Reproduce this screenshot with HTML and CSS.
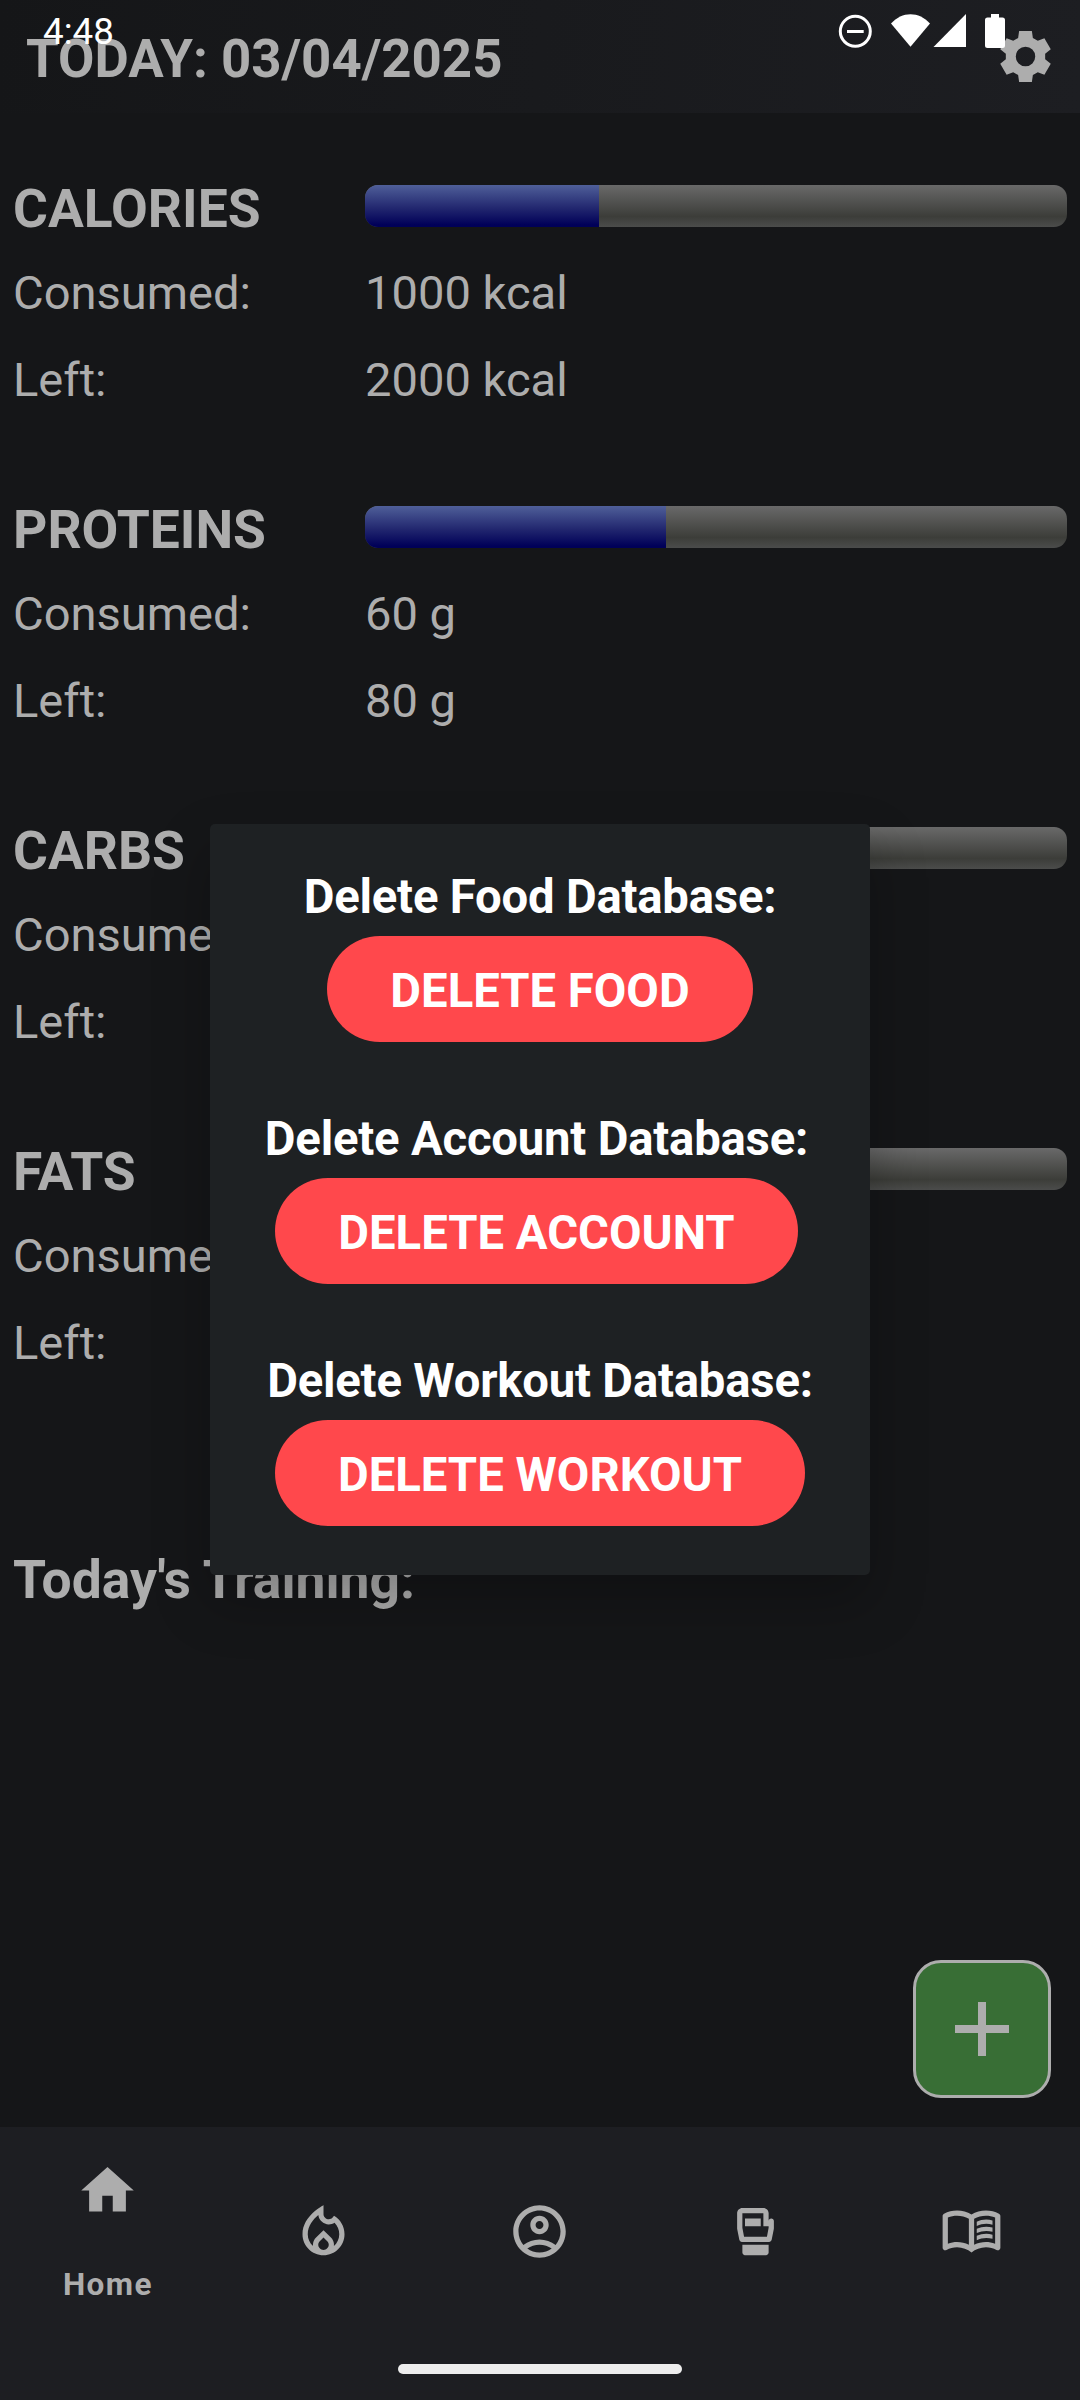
FILE: index.html
```html
<!DOCTYPE html>
<html lang="en">
<head>
<meta charset="utf-8">
<title>Today</title>
<link rel="stylesheet" href="styles.css">
</head>
<body>
<div class="app">
  <header class="topbar">
    <h1 class="title">TODAY: 03/04/2025</h1>
    <svg class="gear" viewBox="-76 -76 152 152"><path fill-rule="evenodd" d="M-22-55L-19-76H19L22-55L36.6-46.6L56.3-54.5L75.3-21.5L58.6-8.4V8.4L75.3 21.5L56.3 54.5L36.6 46.6L22 55L19 76H-19L-22 55L-36.6 46.6L-56.3 54.5L-75.3 21.5L-58.6 8.4V-8.4L-75.3-21.5L-56.3-54.5L-36.6-46.6ZM0-29A29 29 0 1 0 0 29A29 29 0 1 0 0-29Z"/></svg>
  </header>

  <main class="content">
    <section class="macro">
      <h2 class="heading">CALORIES</h2>
      <div class="bar"><div class="fill" style="width:33.33%"></div></div>
      <span>Consumed:</span><span>1000 kcal</span>
      <span>Left:</span><span>2000 kcal</span>
    </section>
    <section class="macro">
      <h2 class="heading">PROTEINS</h2>
      <div class="bar"><div class="fill" style="width:42.86%"></div></div>
      <span>Consumed:</span><span>60 g</span>
      <span>Left:</span><span>80 g</span>
    </section>
    <section class="macro">
      <h2 class="heading">CARBS</h2>
      <div class="bar"></div>
      <span>Consumed:</span><span></span>
      <span>Left:</span><span></span>
    </section>
    <section class="macro">
      <h2 class="heading">FATS</h2>
      <div class="bar"></div>
      <span>Consumed:</span><span></span>
      <span>Left:</span><span></span>
    </section>
    <h2 class="heading training">Today's Training:</h2>
    <div class="fab"><svg viewBox="0 0 54 54"><path d="M23 0h8v23h23v8H31v23h-8V31H0v-8h23z"/></svg></div>
  </main>

  <nav class="bottom">
    <div class="tabs">
      <div class="tab active">
        <svg class="icon" viewBox="0 0 24 24"><path d="M10 20v-6h4v6h5v-8h3L12 3 2 12h3v8z"/></svg>
        <span class="label">Home</span>
      </div>
      <div class="tab">
        <svg class="icon" viewBox="0 0 24 24"><path fill-rule="evenodd" d="M16,6l-0.44,0.55C14.38,8.02,12,7.19,12,5.3V2c0,0-8,4-8,11c0,4.42,3.58,8,8,8s8-3.58,8-8C20,10.04,18.39,7.38,16,6z M12,19c-1.1,0-2-0.87-2-1.94c0-0.51,0.2-0.99,0.58-1.36l1.42-1.4l1.43,1.4C13.8,16.07,14,16.55,14,17.06C14,18.13,13.1,19,12,19z M15.96,17.5c0.04-0.36,0.22-1.89-1.13-3.22L12,11.5l-2.83,2.78c-1.36,1.34-1.17,2.88-1.13,3.22C6.79,16.4,6,14.79,6,13c0-3.16,2.13-5.65,4.03-7.25c0.23,1.99,1.93,3.55,3.99,3.55c0.78,0,1.54-0.23,2.18-0.66C17.34,9.78,18,11.35,18,13C18,14.79,17.21,16.4,15.96,17.5z"/></svg>
      </div>
      <div class="tab">
        <svg class="icon" viewBox="0 0 24 24"><path fill-rule="evenodd" d="M12 2C6.48 2 2 6.48 2 12s4.48 10 10 10 10-4.48 10-10S17.52 2 12 2zM7.35 18.5C8.66 17.56 10.26 17 12 17s3.34.56 4.65 1.5C15.34 19.44 13.74 20 12 20s-3.34-.56-4.65-1.5zm10.79-1.38C16.45 15.8 14.32 15 12 15s-4.45.8-6.14 2.12C4.7 15.73 4 13.95 4 12c0-4.42 3.58-8 8-8s8 3.58 8 8c0 1.95-.7 3.73-1.86 5.12zM12 6c-1.93 0-3.5 1.57-3.5 3.5S10.07 13 12 13s3.5-1.57 3.5-3.5S13.93 6 12 6zm0 5c-.83 0-1.5-.67-1.5-1.5S11.17 8 12 8s1.5.67 1.5 1.5S12.83 11 12 11z"/></svg>
      </div>
      <div class="tab">
        <svg class="icon" viewBox="0 0 24 24"><path fill-rule="evenodd" d="M7 20c0 .55.45 1 1 1h8c.55 0 1-.45 1-1v-3H7zM18 7c-.55 0-1 .45-1 1V5c0-1.1-.9-2-2-2H7c-1.1 0-2 .9-2 2v5.8c0 .13.01.26.04.39l.8 4c.09.47.5.8.98.8h10.36c.45 0 .89-.36.98-.8l.8-4c.03-.13.04-.26.04-.39V8c0-.55-.45-1-1-1zM17 10.6L16.36 14H7.64L7 10.6V5h8v5h2zM8 7h6v3H8z"/></svg>
      </div>
      <div class="tab">
        <svg class="icon" viewBox="0 0 24 24"><path fill-rule="evenodd" d="M22.47 5.2C21 4.44 19.3 4 17.5 4c-2 0-3.9.55-5.5 1.48C10.38 4.55 8.51 4 6.5 4 4.71 4 3.02 4.44 1.53 5.2 1.2 5.36 1 5.71 1 6.08v12.08c0 .58.47.99 1 .99.16 0 .32-.04.48-.12C3.69 18.4 5.05 18 6.5 18c2.07 0 3.98.82 5.5 2 1.52-1.18 3.43-2 5.5-2 1.45 0 2.81.4 4.02 1.04.16.08.32.12.48.12.52 0 1-.41 1-.99V6.08c0-.37-.2-.72-.53-.88zM11 17c-1.4-.65-2.95-1-4.5-1-1.19 0-2.36.21-3.5.62V6.71C4.11 6.24 5.28 6 6.5 6c1.6 0 3.15.4 4.5 1.15zM21 16.62c-1.14-.41-2.31-.62-3.5-.62-1.55 0-3.1.35-4.5 1V7.15C14.35 6.4 15.9 6 17.5 6c1.22 0 2.39.24 3.5.71zM14 9.9V8.25c1.9-.85 4-1 6-.45v1.6c-2-.55-4.1-.4-6 .5zM14 12.6v-1.65c1.9-.85 4-1 6-.45v1.6c-2-.55-4.1-.4-6 .5zM14 15.3v-1.65c1.9-.85 4-1 6-.45v1.6c-2-.55-4.1-.4-6 .5z"/></svg>
      </div>
    </div>
    <div class="pill"></div>
  </nav>

  <div class="overlay">
    <div class="dialog">
      <div class="action">
        <p>Delete Food Database:</p>
        <button class="danger">DELETE FOOD</button>
      </div>
      <div class="action account">
        <p>Delete Account Database:</p>
        <button class="danger">DELETE ACCOUNT</button>
      </div>
      <div class="action">
        <p>Delete Workout Database:</p>
        <button class="danger">DELETE WORKOUT</button>
      </div>
    </div>
  </div>

  <div class="status">
    <span class="clock">4:48</span>
    <svg class="indicators" viewBox="836 12 172 40">
      <circle cx="855.3" cy="31.3" r="15" fill="none" stroke="#fff" stroke-width="3"/>
      <path d="M847 30h16.7v3H847z"/>
      <path d="M910.5 46.8L891 23.5C902 11 919 11 930 23.5z"/>
      <path d="M966 14v33h-32.5z"/>
      <path d="M991 14h8v3.5h3.5a2.5 2.5 0 0 1 2.500 2.500V45.500a2.500 2.500 0 0 1-2.500 2.500h-15a2.500 2.500 0 0 1-2.500-2.500V20a2.500 2.500 0 0 1 2.500-2.500h3.500z"/>
    </svg>
  </div>
</div>
</body>
</html>
```
FILE: styles.css
```css
* { box-sizing: border-box; }
body { margin: 0; background: #151618; font-family: Roboto, sans-serif; color: #adadad; }
h1, h2, p { margin: 0; }

.app {
  position: relative;
  width: 1080px;
  height: 2400px;
  overflow: hidden;
  display: flex;
  flex-direction: column;
}

.topbar {
  height: 113px;
  padding: 28px 30px 0 26px;
  display: flex;
  justify-content: space-between;
  align-items: flex-start;
  background: linear-gradient(95deg, #151618, #1d1e22);
}
.title, .heading { font-size: 53.4px; line-height: 62px; font-weight: 700; }
.title { font-size: 52.8px; }
.gear { width: 51px; height: 51px; margin-top: 3px; margin-right: -1px; fill: #adadad; }

.content {
  flex: 1;
  padding: 55px 13px 0;
  display: flex;
  flex-direction: column;
}
.macro {
  height: 321px;
  display: grid;
  grid-template-columns: 352px 702px;
  grid-template-rows: 81px 87px 87px;
  align-items: center;
  font-size: 47.1px;
  line-height: 56px;
}
.macro .heading { padding-top: 1px; }
.bar {
  height: 42px;
  margin-bottom: 5px;
  border-radius: 13px;
  overflow: hidden;
  background: linear-gradient(#696969, #3c3d39 75%, #4b4c4b);
}
.fill { height: 100%; background: linear-gradient(#4f5f99, #22276f 55%, #000058 95%); }
.training { margin-top: 97px; }
.fab {
  width: 138px;
  height: 138px;
  margin: auto 16px 29px auto;
  border: 3px solid #adadad;
  border-radius: 28px;
  background: #386e35;
  display: flex;
  align-items: center;
  justify-content: center;
}
.fab svg { width: 54px; height: 54px; fill: #adadad; }

.bottom {
  height: 273px;
  background: #1d1e22;
  display: flex;
  flex-direction: column;
  align-items: center;
}
.tabs { display: flex; width: 100%; height: 237px; padding-right: 1px; }
.tab { flex: 1; display: flex; flex-direction: column; align-items: center; padding-top: 73px; }
.tab.active { padding-top: 32px; }
.icon { width: 63px; height: 63px; fill: #adadad; }
.label { margin-top: 42px; font-size: 31.5px; line-height: 42px; font-weight: 700; letter-spacing: 1.4px; }
.pill { width: 284px; height: 10px; border-radius: 5px; background: #ededed; }

.overlay { position: absolute; inset: 0; display: flex; justify-content: center; align-items: flex-start; padding-top: 824px; }
.dialog {
  width: 660px;
  height: 751px;
  padding-top: 45px;
  border-radius: 5px;
  background: #1e2123;
  box-shadow: 0 26px 56px rgba(0, 0, 0, .25);
  display: flex;
  flex-direction: column;
  align-items: center;
  gap: 69px;
}
.action { display: flex; flex-direction: column; align-items: center; gap: 11px; color: #fff; font-size: 47.25px; line-height: 56px; font-weight: 700; }
.action p { letter-spacing: -.2px; }
.account { margin-right: 7px; }
.danger {
  height: 106px;
  padding: 4px 63px 0;
  border: 0;
  border-radius: 53px;
  background: #ff484c;
  color: #fff;
  font: inherit;
}

.status {
  position: absolute;
  top: 0;
  left: 0;
  right: 0;
  padding: 10px 72px 0 43px;
  display: flex;
  justify-content: space-between;
  color: #fff;
}
.clock { font-size: 36.75px; line-height: 43px; }
.indicators { width: 172px; height: 40px; margin-top: 2px; fill: #fff; }
```
